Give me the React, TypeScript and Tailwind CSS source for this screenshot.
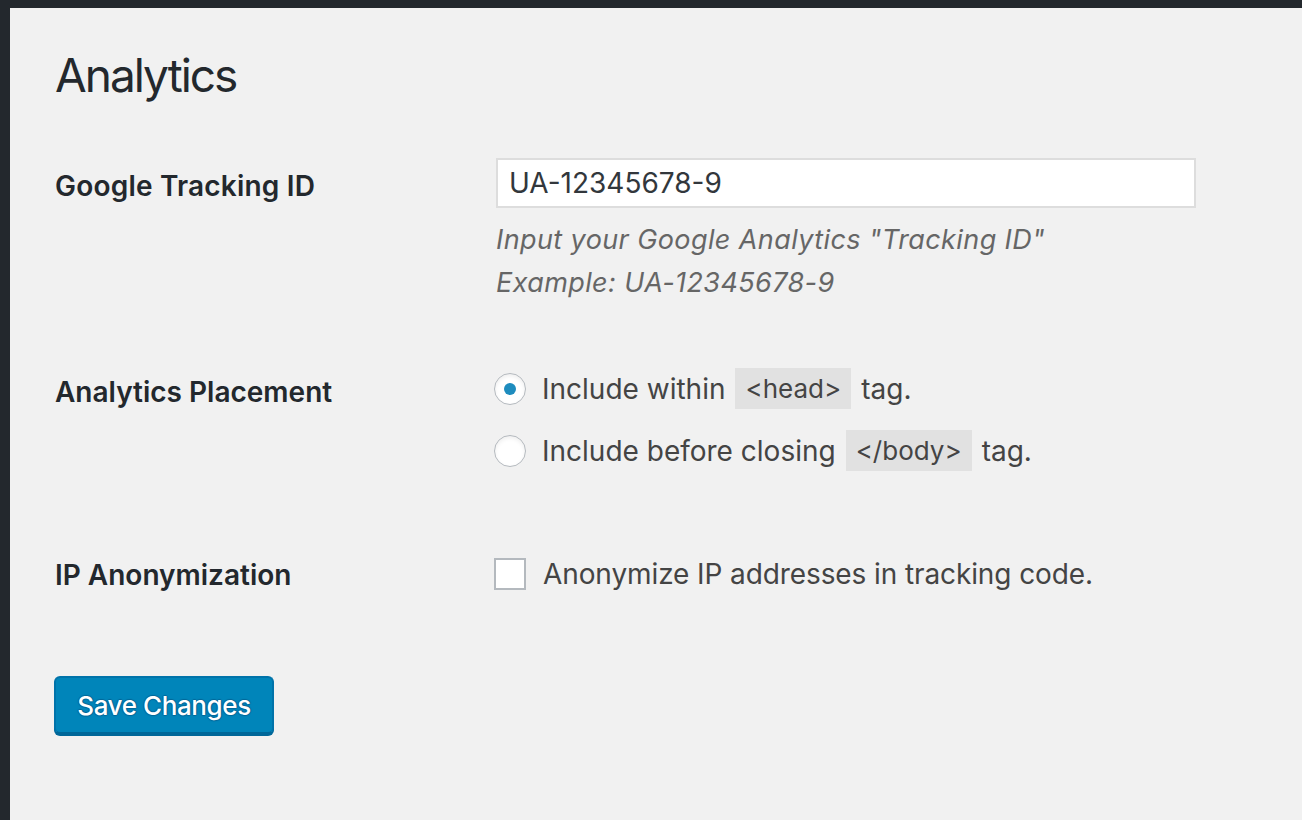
import React from "react";

function CodeTag({ children }: { children: React.ReactNode }) {
  return (
    <code className="mx-[10px] inline-block h-[41px] bg-[#e1e1e1] px-[10px] font-[inherit] text-[26px] leading-[41px] text-[#444]">
      {children}
    </code>
  );
}

function Radio({ checked }: { checked?: boolean }) {
  return (
    <span className="flex h-[32px] w-[32px] shrink-0 items-center justify-center rounded-full border border-[#b4b9be] bg-white shadow-[inset_0_2px_4px_rgba(0,0,0,0.07)]">
      {checked && <span className="h-[12px] w-[12px] rounded-full bg-[#1e8cbe]" />}
    </span>
  );
}

function App() {
  return (
    <div
      className="flex h-[820px] w-full flex-col overflow-hidden bg-[#f1f1f1]"
      style={{ fontFamily: "Inter, 'Noto Sans', sans-serif" }}
    >
      <div className="h-[8px] w-full shrink-0 bg-[#23282d]" />
      <div className="flex flex-1">
        <div className="w-[10px] shrink-0 bg-[#23282d]" />
        <div className="flex-1 pl-[45px] pt-[37px]">
          <h1 className="text-[46px] leading-[60px] font-normal tracking-[-2px] text-[#23282d]">Analytics</h1>

          {/* tracking id */}
          <div className="mt-[53px] flex">
            <div className="w-[441px] shrink-0 pt-[8px] text-[28px] leading-[40px] font-semibold tracking-[0.2px] text-[#23282d]">
              Google Tracking ID
            </div>
            <div>
              <input
                type="text"
                defaultValue="UA-12345678-9"
                className="h-[50px] w-[700px] border-2 border-[#dddddd] bg-white px-[11px] text-[28px] text-[#32373c] outline-none"
              />
              <p className="mt-[10px] text-[27px] leading-[43px] italic tracking-[0.4px] text-[#666]">
                Input your Google Analytics "Tracking ID"
                <br />
                Example: UA-12345678-9
              </p>
            </div>
          </div>

          {/* placement */}
          <div className="mt-[64px] flex">
            <div className="w-[439px] shrink-0 pt-[4px] text-[28px] leading-[40px] font-semibold text-[#23282d]">
              Analytics Placement
            </div>
            <div className="flex flex-col gap-[21px]">
              <label className="flex h-[41px] items-center text-[28px] text-[#444]">
                <Radio checked />
                <span className="ml-[16px]">Include within</span>
                <CodeTag>&lt;head&gt;</CodeTag>
                <span>tag.</span>
              </label>
              <label className="flex h-[41px] items-center text-[28px] text-[#444]">
                <Radio />
                <span className="ml-[16px]">Include before closing</span>
                <CodeTag>&lt;/body&gt;</CodeTag>
                <span>tag.</span>
              </label>
            </div>
          </div>

          {/* anonymization */}
          <div className="mt-[87px] flex">
            <div className="w-[439px] shrink-0 text-[28px] leading-[34px] font-semibold text-[#23282d]">
              IP Anonymization
            </div>
            <label className="flex h-[32px] items-center text-[28px] text-[#444]">
              <span className="h-[32px] w-[32px] shrink-0 border-2 border-[#b4b9be] bg-white" />
              <span className="ml-[17px] tracking-[-0.1px]">Anonymize IP addresses in tracking code.</span>
            </label>
          </div>

          <button className="mt-[84px] -ml-[1px] h-[58px] w-[220px] rounded-[6px] border-2 border-[#0073aa] border-b-[#006799] bg-[#0085ba] text-[26px] font-medium tracking-[-0.4px] text-white shadow-[0_2px_0_#006799] [text-shadow:0_-1px_1px_#006799,1px_0_1px_#006799,0_1px_1px_#006799,-1px_0_1px_#006799]">
            Save Changes
          </button>
        </div>
      </div>
    </div>
  );
}

export default App;
